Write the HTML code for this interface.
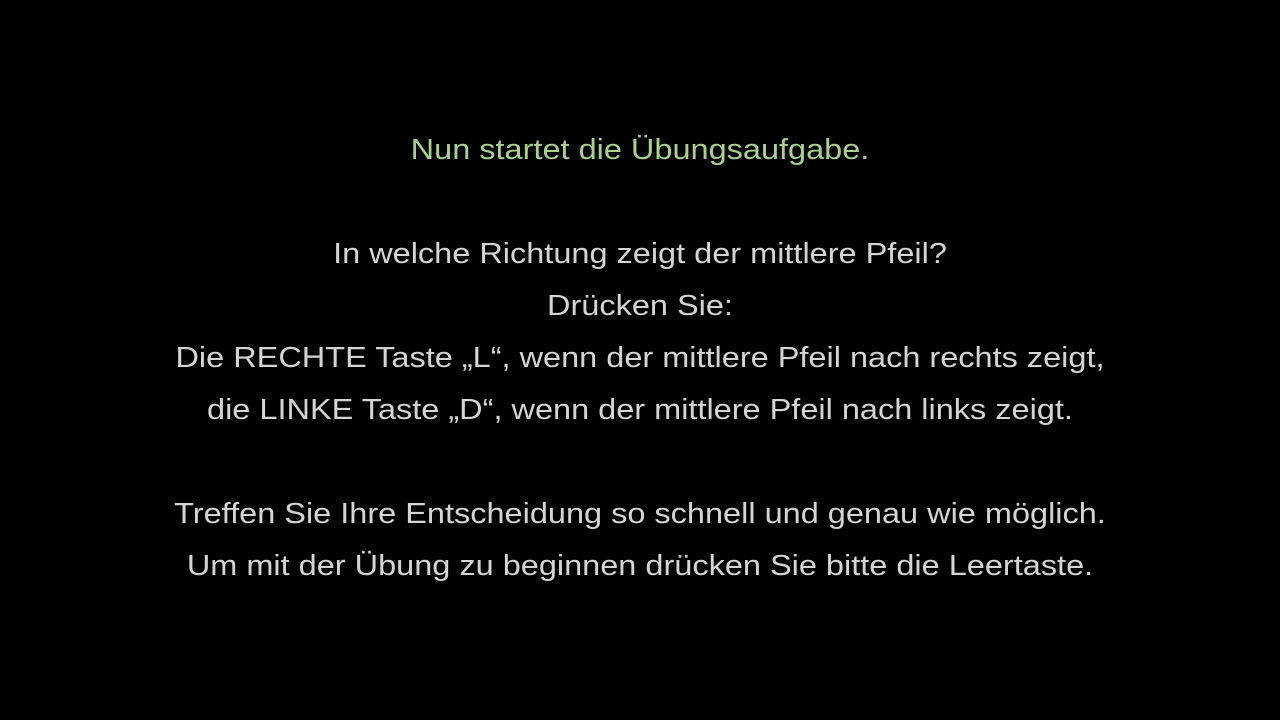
<!DOCTYPE html>
<html><head><meta charset="utf-8"><style>
html,body{margin:0;padding:0;background:#000;width:1280px;height:720px;overflow:hidden}
.l{position:absolute;left:0;width:1280px;text-align:center;font-family:"Liberation Sans",sans-serif;font-size:29px;line-height:52px;color:#d4d4d4;transform:scaleX(1.12);transform-origin:640px 0;white-space:nowrap}
.g{color:#a9d18e}
</style></head><body>
<div class="l g" style="top:124px">Nun startet die Übungsaufgabe.</div>
<div class="l" style="top:228px">In welche Richtung zeigt der mittlere Pfeil?</div>
<div class="l" style="top:280px">Drücken Sie:</div>
<div class="l" style="top:332px">Die RECHTE Taste „L“, wenn der mittlere Pfeil nach rechts zeigt,</div>
<div class="l" style="top:384px">die LINKE Taste „D“, wenn der mittlere Pfeil nach links zeigt.</div>
<div class="l" style="top:488px">Treffen Sie Ihre Entscheidung so schnell und genau wie möglich.</div>
<div class="l" style="top:540px">Um mit der Übung zu beginnen drücken Sie bitte die Leertaste.</div>
</body></html>
